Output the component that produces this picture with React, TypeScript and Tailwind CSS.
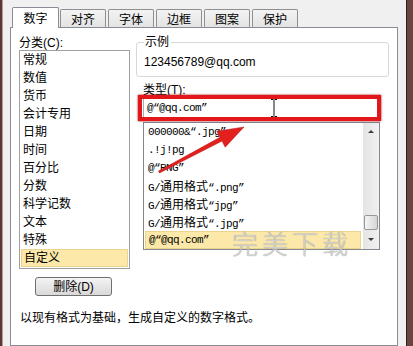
import React from 'react'

const tabs = ['数字', '对齐', '字体', '边框', '图案', '保护']

const categories = ['常规', '数值', '货币', '会计专用', '日期', '时间', '百分比', '分数', '科学记数', '文本', '特殊', '自定义']

const formats = ['000000&“.jpg”', '.!j!pg', '@“PNG”', 'G/通用格式“.png”', 'G/通用格式“jpg”', 'G/通用格式“.jpg”', '@“@qq.com”']

// SimSun-ish look: half width latin, full width hanzi
function Mixed({ text }: { text: string }) {
	const parts = text.split(/([\u4e00-\u9fff]+)/).filter(Boolean)
	return (
		<>
			{parts.map((p, i) =>
				/[\u4e00-\u9fff]/.test(p) ? (
					<span key={i} className="text-[12px] tracking-normal font-['Noto_Sans_CJK_SC',sans-serif]">
						{p}
					</span>
				) : (
					<span key={i}>{p}</span>
				)
			)}
		</>
	)
}

export default function App() {
	return (
		<div className="relative flex w-[413px] h-[346px] overflow-hidden bg-[#6b4540] text-[12px] text-black font-['Liberation_Sans','Noto_Sans_CJK_SC',sans-serif]">
			<div className="w-[2px] bg-[#5a3833]" />
			<div className="w-[1px] bg-[#b79c99]" />
			<div className="flex flex-col w-[403px] bg-[#f0f0f0] pl-[7px] pr-[8px]">
				{/* tab strip */}
				<div className="flex items-end h-[27px] pl-[2px]">
					{tabs.map((t, i) =>
						i === 0 ? (
							<div
								key={t}
								className="relative z-10 flex justify-center items-center w-[47px] h-[21px] mb-[-1px] pt-[1px] bg-white border border-b-0 border-[#898c95] rounded-t-[2px]"
							>
								{t}
							</div>
						) : (
							<div
								key={t}
								className={`flex justify-center items-center w-[46px] h-[18px] pt-[2px] bg-gradient-to-b from-[#f3f3f3] to-[#e3e3e3] border border-b-0 border-[#8e8f8f] rounded-t-[2px] ${i === 1 ? 'ml-[1px]' : 'ml-[2px]'}`}
							>
								{t}
							</div>
						)
					)}
				</div>

				{/* panel */}
				<div className="flex flex-1 pl-[8px] pt-[8px] bg-white border border-[#898c95]">
					{/* left column */}
					<div className="flex flex-col w-[111px] shrink-0">
						<div className="h-[14px] leading-[14px]">分类(C):</div>
						<div className="h-[219px] border border-[#a0a0a0] bg-white">
							{categories.map((c, i) => (
								<div
									key={c}
									className={
										i === categories.length - 1
											? 'h-[18px] leading-[17px] mx-[1px] pl-[2px] bg-[#fce9a9] border border-[#ecd48e]'
											: 'h-[18px] leading-[18px] pl-[3px]'
									}
								>
									{c}
								</div>
							))}
						</div>
						<button className="flex justify-center items-center mt-[8px] ml-[16px] w-[77px] h-[19px] rounded-[3px] border border-[#707070] bg-gradient-to-b from-[#f4f4f4] to-[#d9d9d9] text-[12px] leading-none">
							删除(D)
						</button>
						<div className="mt-[15px] ml-[1px] leading-[14px] whitespace-nowrap">以现有格式为基础，生成自定义的数字格式。</div>
					</div>

					{/* right column */}
					<div className="flex flex-col ml-[6px] w-[253px] shrink-0">
						<fieldset className="border border-[#d5d9dc] rounded-[3px] pl-[7px]">
							<legend className="pl-[1px] pr-[2px] leading-[12px]">示例</legend>
							<div className="flex items-center h-[28px] text-[12px]">123456789@qq.com</div>
						</fieldset>
						<div className="mt-[7px] ml-[7px] h-[13px] leading-[13px]">类型(T):</div>
						<div className="relative mt-[1px] ml-[7px] w-[237px] h-[20px] border border-[#abadb3] pl-[3px] leading-[18px] text-[11px] tracking-[-0.6px] font-['Liberation_Mono','Noto_Sans_CJK_SC',monospace]">
							@“@qq.com”
							<div className="absolute -left-[6px] -top-[4px] w-[243px] h-[26px] border-[4px] border-[#e2171c] shadow-[0_0_2px_#9a0000]" />
							<svg className="absolute left-[126px] top-0" width="8" height="18" viewBox="0 0 8 18">
								<path d="M1 0.5h2.5M4.5 0.5H7M4 1v16M1 17.5h2.5M4.5 17.5H7" stroke="#111" strokeWidth="1" fill="none" />
							</svg>
						</div>
						<div className="flex mt-[4px] ml-[7px] w-[237px] h-[128px] border border-[#828790]">
							<div className="flex-1 text-[11px] tracking-[-0.6px] font-['Liberation_Mono','Noto_Sans_CJK_SC',monospace]">
								{formats.map((f, i) => (
									<div
										key={f}
										className={
											i === formats.length - 1
												? 'h-[18px] leading-[17px] mx-[1px] pl-[3px] bg-[#fce9a9] border border-[#ecd48e]'
												: 'h-[18px] leading-[18px] pl-[4px]'
										}
									>
										<Mixed text={f} />
									</div>
								))}
							</div>
							<div className="flex flex-col w-[17px] border-l border-white bg-gradient-to-r from-[#e4e4e4] to-[#f1f1f1]">
								<div className="flex justify-center items-center h-[17px]">
									<div className="w-0 h-0 border-x-[3px] border-x-transparent border-b-[3px] border-b-[#3c3c3c]" />
								</div>
								<div className="h-[75px]" />
								<div className="h-[15px] mx-[1px] rounded-[2px] border border-[#979797] bg-gradient-to-r from-[#f5f5f5] to-[#d5d5d5]" />
								<div className="flex flex-1 justify-center items-center">
									<div className="w-0 h-0 border-x-[3px] border-x-transparent border-t-[3px] border-t-[#3c3c3c]" />
								</div>
							</div>
						</div>
					</div>
				</div>
			</div>
			<div className="w-[1px] bg-[#2e2020]" />
			<div className="flex-1 bg-[#6b4540]" />

			{/* annotation arrow */}
			<svg className="absolute left-0 top-0 pointer-events-none" width="413" height="346" viewBox="0 0 413 346">
				<polygon
					points="158.5,171.1 220,137.3 216.8,131.2 244,127 225.2,147.2 222,141.1 159.5,172.9"
					fill="#e2201e"
					stroke="#b81414"
					strokeWidth="0.5"
				/>
			</svg>

			{/* watermark */}
			<div className="absolute left-[232px] top-[227px] text-[26px] leading-[32px] tracking-[4px] text-[#cdcdcd] opacity-90 [text-shadow:0_0_1px_#8a8a8a] font-['Noto_Sans_CJK_SC',sans-serif] font-light pointer-events-none">
				完美下载
			</div>
		</div>
	)
}
